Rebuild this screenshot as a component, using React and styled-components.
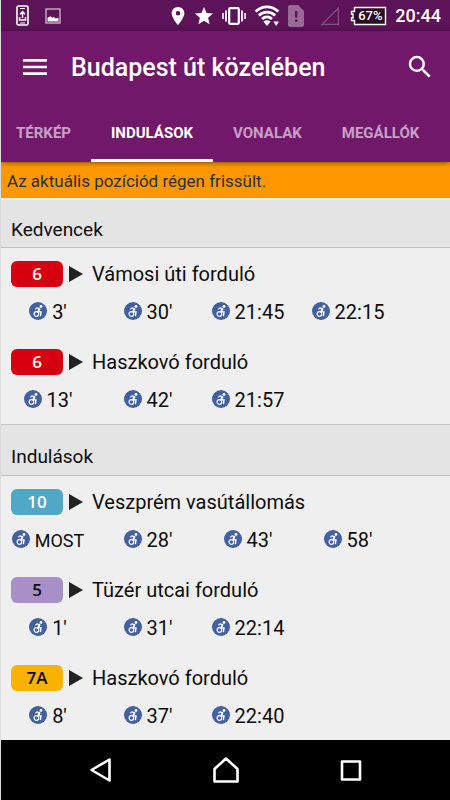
import React, { Component } from 'react'
import styled, { createGlobalStyle } from 'styled-components'
import { MdLocationOn, MdMenu, MdSearch, MdStar } from 'react-icons/md'

const tabs = ['Térkép', 'Indulások', 'Vonalak', 'Megállók']

const sections = [
  {
    title: 'Kedvencek',
    lines: [
      {
        number: '6',
        color: '#d6000f',
        headsign: 'Vámosi úti forduló',
        times: ["3'", "30'", '21:45', '22:15'],
      },
      {
        number: '6',
        color: '#d6000f',
        headsign: 'Haszkovó forduló',
        times: ["13'", "42'", '21:57'],
      },
    ],
  },
  {
    title: 'Indulások',
    lines: [
      {
        number: '10',
        color: '#4fa8c5',
        headsign: 'Veszprém vasútállomás',
        times: ['MOST', "28'", "43'", "58'"],
      },
      {
        number: '5',
        color: '#a98fc7',
        dark: true,
        headsign: 'Tüzér utcai forduló',
        times: ["1'", "31'", '22:14'],
      },
      {
        number: '7A',
        color: '#f9b200',
        dark: true,
        headsign: 'Haszkovó forduló',
        times: ["8'", "37'", '22:40'],
      },
    ],
  },
]

const StatusIcons = () => (
  <StatusBar>
    <StatusGroup $gap={16}>
      <svg width="13" height="22" viewBox="0 0 13 22" fill="none" stroke="#fff">
        <rect x="1" y="1" width="11" height="19" rx="1.5" strokeWidth="1.6" />
        <path d="M4 3.5h5M4 18h5" strokeWidth="1" />
        <path d="M6.5 13V7M4 9.3l2.5-2.6L9 9.3M3.5 12v3h6v-3" strokeWidth="1.5" />
      </svg>
      <svg width="16" height="16" viewBox="0 0 16 16">
        <rect x="1" y="1" width="14" height="14" fill="none" stroke="#c9aec7" strokeWidth="1.4" />
        <path d="M2.5 13.5V9.8l3-1.6 1.8 1.6 1.6-.8 1.8 1.4 2.8-.6v3.7z" fill="#fff" />
      </svg>
    </StatusGroup>
    <StatusGroup $gap={8}>
      <PinIcon viewBox="4 1 16 22" />
      <StarIcon viewBox="1 1 22 22" />
      <svg width="24" height="20" viewBox="0 0 24 20" fill="none" stroke="#fff">
        <rect x="7.2" y="2.2" width="9.6" height="15.6" rx="1" strokeWidth="2.2" />
        <path d="M4 4.5v11M20 4.5v11" strokeWidth="1.8" />
        <path d="M1 7v6M23 7v6" strokeWidth="1.6" />
      </svg>
      <svg width="26" height="22" viewBox="0 0 26 22" fill="none" stroke="#fff">
        <path d="M1.6 6.6C8.2.3 17.8.3 24.4 6.6" strokeWidth="2.8" />
        <path d="M4.8 10.4c4.8-4.4 11.6-4.4 16.4 0" strokeWidth="2.8" />
        <path d="M8 14c3-2.7 7-2.7 10 0" strokeWidth="2.8" />
        <path d="M9.4 16.6c2.2-1.9 5-1.9 7.2 0L13 21z" fill="#fff" stroke="none" />
        <path d="M19.5 16.5H25L22.2 21z" fill="#fff" stroke="none" />
      </svg>
      <svg width="16" height="22" viewBox="0 0 16 22">
        <path d="M2 0h8l6 6v14a2 2 0 0 1-2 2H2a2 2 0 0 1-2-2V2a2 2 0 0 1 2-2z" fill="#986a95" />
        <path d="M7 6h2.4v6.5H7zM7 14.5h2.4v2.4H7z" fill="#5c1357" />
      </svg>
      <svg width="30" height="20" viewBox="0 0 30 20">
        <path d="M10 18.4h16.4V2z" fill="none" stroke="#84507f" strokeWidth="1.2" />
      </svg>
      <Battery>
        <svg width="37" height="20" viewBox="0 0 37 20">
          <path
            d="M4.5 1.5h31v17h-31v-4h-3v-2.5h1.5v-4H1.5V5.500h3z"
            fill="#2c0a2a"
            stroke="#fff"
            strokeWidth="1.4"
          />
        </svg>
        <BatteryText>67%</BatteryText>
      </Battery>
      <Clock>20:44</Clock>
    </StatusGroup>
  </StatusBar>
)

const Wheelchair = () => (
  <WheelchairDisc>
    <svg width="12" height="12" viewBox="0 0 12 12" fill="none" stroke="#fff">
      <circle cx="9" cy="1.4" r="1.4" fill="#fff" stroke="none" />
      <path d="M3.3 4.400L5 2.800l2.900.8" strokeWidth="1.2" />
      <path d="M7.700 3.300L6.200 6.700" strokeWidth="2" />
      <path d="M5.600 6.900h3.400l-.6 4.300" strokeWidth="1.400" />
      <circle cx="4.400" cy="9" r="2.300" strokeWidth="1.200" />
    </svg>
  </WheelchairDisc>
)

const Line = ({ line }) => (
  <LineRow>
    <LineHeader>
      <Badge $color={line.color} $dark={line.dark}>
        {line.number}
      </Badge>
      <Arrow width="14" height="16" viewBox="0 0 14 16">
        <path d="M0 0l14 8-14 8z" fill="#212121" />
      </Arrow>
      <Headsign>{line.headsign}</Headsign>
    </LineHeader>
    <Times>
      {line.times.map(time => (
        <Time key={time} $word={time === 'MOST'}>
          <Wheelchair />
          {time}
        </Time>
      ))}
    </Times>
  </LineRow>
)

class App extends Component {
  constructor(props) {
    super(props)
    this.state = {
      activeTab: 'Indulások',
    }
  }

  handleTabClick = tab => {
    this.setState({ activeTab: tab })
  }

  render() {
    const { activeTab } = this.state

    return (
      <Screen>
        <GlobalStyle />
        <StatusIcons />
        <Header>
          <Toolbar>
            <IconButton aria-label="Menü">
              <MdMenu size={32} />
            </IconButton>
            <Title>Budapest út közelében</Title>
            <IconButton aria-label="Keresés">
              <MdSearch size={30} />
            </IconButton>
          </Toolbar>
          <Tabs role="tablist">
            {tabs.map(tab => (
              <Tab
                key={tab}
                role="tab"
                aria-selected={tab === activeTab}
                $active={tab === activeTab}
                onClick={() => this.handleTabClick(tab)}
              >
                {tab}
              </Tab>
            ))}
          </Tabs>
        </Header>
        <Notice>Az aktuális pozíciód régen frissült.</Notice>
        <main>
          {sections.map(section => (
            <section key={section.title}>
              <SectionTitle>{section.title}</SectionTitle>
              {section.lines.map(line => (
                <Line key={line.number + line.headsign} line={line} />
              ))}
            </section>
          ))}
        </main>
        <SystemNav>
          <NavButton aria-label="Vissza">
            <svg width="26" height="26" viewBox="0 0 26 26">
              <path d="M21.5 2.5v21L3.5 13z" />
            </svg>
          </NavButton>
          <NavButton aria-label="Kezdőképernyő">
            <svg width="26" height="26" viewBox="0 0 26 26">
              <path d="M1.5 24.5V12L13 1.5 24.5 12v12.5z" />
            </svg>
          </NavButton>
          <NavButton aria-label="Legutóbbiak">
            <svg width="26" height="26" viewBox="0 0 26 26">
              <path d="M4 4.500h18v18H4z" />
            </svg>
          </NavButton>
        </SystemNav>
      </Screen>
    )
  }
}

export default App

const GlobalStyle = createGlobalStyle`
  * {
    box-sizing: border-box;
  }

  body {
    margin: 0;
    background: #efefef;
    font-family: Roboto, 'Liberation Sans', sans-serif;
  }

  button {
    border: 0;
    padding: 0;
    background: none;
    font-family: inherit;
    cursor: pointer;
  }

  svg {
    display: block;
    flex: none;
  }
`

const Screen = styled.div`
  min-height: 100vh;
  display: flex;
  flex-direction: column;
  border-left: 1px solid #dcdcdc;
  background: #efefef;
  color: #0c0c0c;
  overflow: hidden;
`

const StatusBar = styled.div`
  height: 31px;
  padding: 0 9px 0 15px;
  display: flex;
  align-items: center;
  justify-content: space-between;
  background: #5c1357;
  color: #fff;
`

const StatusGroup = styled.div`
  display: flex;
  align-items: center;
  gap: ${props => props.$gap}px;
`

const PinIcon = styled(MdLocationOn)`
  width: 16px;
  height: 20px;
`

const StarIcon = styled(MdStar)`
  width: 20px;
  height: 20px;
`

const Battery = styled.div`
  display: grid;
  place-items: center;

  > * {
    grid-area: 1 / 1;
  }
`

const BatteryText = styled.span`
  padding-left: 3px;
  font-size: 13px;
  font-weight: 500;
  line-height: 20px;
`

const Clock = styled.span`
  font-size: 18px;
  font-weight: 500;
  line-height: 24px;
`

const Header = styled.header`
  background: #72186b;
  color: #fff;
  z-index: 1;
  box-shadow: 0 1px 5px rgba(0, 0, 0, 0.5);
`

const Toolbar = styled.div`
  height: 71px;
  padding: 0 15px 0 18px;
  display: flex;
  align-items: center;
`

const IconButton = styled.button`
  color: #fff;
`

const Title = styled.h1`
  flex: 1;
  margin: 0 0 0 20px;
  padding-top: 2px;
  font-size: 25px;
  font-weight: 500;
  line-height: 32px;
`

const Tabs = styled.div`
  margin-left: -5px;
  display: flex;
`

const Tab = styled.button`
  height: 60px;
  padding: 4px 20px 0;
  border-bottom: 3px solid ${props => (props.$active ? '#fff' : 'transparent')};
  color: ${props => (props.$active ? '#fff' : '#c8a0c5')};
  font-size: 15px;
  font-weight: 700;
  text-transform: uppercase;
  white-space: nowrap;
`

const Notice = styled.div`
  padding: 7px 6px 5px;
  background: #ff9800;
  color: #263238;
  font-size: 17px;
  line-height: 24px;
`

const SectionTitle = styled.h2`
  margin: 0;
  padding: 20px 10px 6px;
  border-top: 1px solid #c4c4c4;
  border-bottom: 1px solid #c0c0c0;
  background: #e4e4e4;
  font-size: 19px;
  font-weight: 400;
  line-height: 24px;

  section:first-child > & {
    border-top: 2px solid #efefef;
    padding-top: 18px;
    padding-bottom: 5px;
  }
`

const LineRow = styled.article`
  padding: 13px 0 10px;
`

const LineHeader = styled.div`
  padding-left: 10px;
  display: flex;
  align-items: center;
`

const Badge = styled.span`
  width: 52px;
  height: 26px;
  border-radius: 6px;
  background: ${props => props.$color};
  color: ${props => (props.$dark ? '#0c0c0c' : '#fff')};
  font-family: 'Open Sans', 'Noto Sans', sans-serif;
  font-size: 17px;
  font-weight: 600;
  line-height: 26px;
  text-align: center;
`

const Arrow = styled.svg`
  margin: 0 9px 0 6px;
`

const Headsign = styled.h3`
  margin: 0;
  font-size: 20px;
  font-weight: 400;
  line-height: 26px;
`

const Times = styled.div`
  margin-top: 12px;
  padding-right: 49px;
  display: grid;
  grid-template-columns: repeat(4, 1fr);
`

const Time = styled.div`
  padding-right: 6px;
  display: flex;
  align-items: center;
  justify-content: center;
  gap: 5px;
  font-size: ${props => (props.$word ? 18 : 20)}px;
  line-height: 27px;
`

const WheelchairDisc = styled.span`
  width: 18px;
  height: 18px;
  margin-bottom: 3px;
  display: grid;
  place-items: center;
  border-radius: 50%;
  background: #43609f;
`

const SystemNav = styled.nav`
  height: 60px;
  margin-top: auto;
  padding: 0 37px;
  display: grid;
  grid-template-columns: repeat(3, 1fr);
  background: #000;
`

const NavButton = styled.button`
  display: grid;
  place-items: center;

  path {
    fill: none;
    stroke: #fff;
    stroke-width: 2.6px;
    stroke-linejoin: round;
  }
`
